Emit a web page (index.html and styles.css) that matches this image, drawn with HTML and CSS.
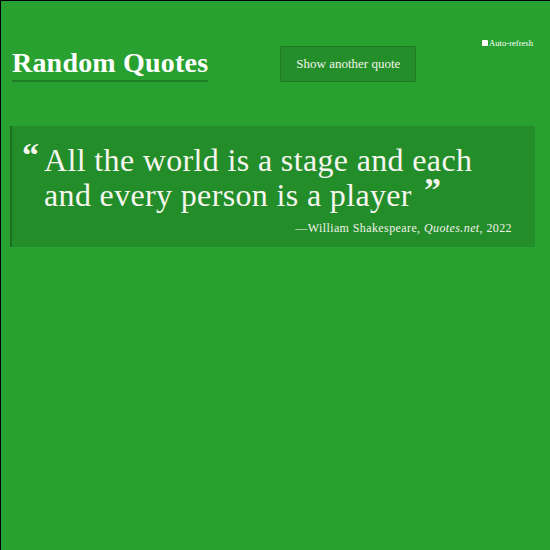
FILE: index.html
```html
<!DOCTYPE html>
<html lang="en">
<head>
<meta charset="utf-8">
<title>Random Quotes</title>
<link rel="stylesheet" href="styles.css">
</head>
<body>
<div class="page">
  <header class="header">
    <h1 class="title">Random Quotes</h1>
    <button class="next-btn" type="button">Show another quote</button>
    <label class="auto"><input class="auto-box" type="checkbox">Auto-refresh</label>
  </header>
  <blockquote class="quote">
    <p class="quote-text"><span class="mark open">“</span>All the world is a stage and each and every person is a player<span class="mark close">”</span></p>
    <footer class="cite">—William Shakespeare, <em>Quotes.net</em>, 2022</footer>
  </blockquote>
</div>
</body>
</html>
```
FILE: styles.css
```css
html {
  background: #000;
}
body {
  margin: 1px 0 0 1px;
  min-height: 549px;
  background: #29a130;
  font-family: "Liberation Serif", "DejaVu Serif", serif;
  color: #fff;
}
.page {
  margin-left: -1px;
  background: #29a130;
  padding: 21px 15px 36px 10px;
}
.header {
  display: flex;
  align-items: flex-end;
  height: 60px;
}
.title {
  margin: 0 0 0 2px;
  font-size: 28px;
  line-height: 28px;
  font-weight: bold;
  letter-spacing: 0.2px;
  padding-bottom: 3px;
  border-bottom: 2px solid #1f7d25;
}
.next-btn {
  margin-left: 72px;
  width: 136px;
  height: 36px;
  background: #248f2a;
  border: 1px solid #1d7a23;
  border-radius: 2px;
  color: #f4f4ec;
  font-family: inherit;
  font-size: 13px;
  padding: 0;
}
.auto {
  align-self: flex-start;
  margin: 16px 2px 0 auto;
  font-size: 8.6px;
  display: flex;
  align-items: center;
  gap: 1px;
}
.auto-box {
  appearance: none;
  margin: 0;
  width: 6px;
  height: 6px;
  background: #fff;
  border-radius: 1px;
}
.quote {
  margin: 44px 0 0 0;
  background: #238d2a;
  border-left: 2px solid #1b6f20;
  padding: 17px 16px 11px 10px;
}
.quote-text {
  margin: 0;
  padding-left: 22px;
  text-indent: -22px;
  font-size: 32px;
  line-height: 35px;
  letter-spacing: 0.35px;
  color: #f6f6ef;
}
.mark {
  font-weight: bold;
  font-size: 34px;
  display: inline-block;
  text-indent: 0;
  vertical-align: 5px;
  line-height: 0;
}
.open {
  width: 22px;
}
.close {
  margin-left: 12px;
}
.cite {
  margin-top: 8px;
  text-align: right;
  font-size: 12px;
  letter-spacing: 0.4px;
  padding-right: 7px;
  color: #f2f2ea;
}
```
